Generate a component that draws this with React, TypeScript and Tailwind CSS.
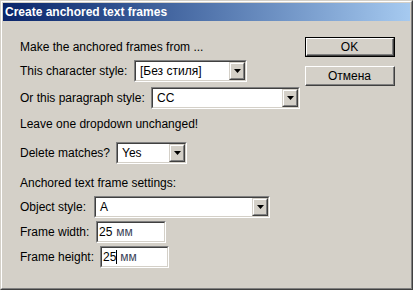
import React from 'react';

function Sunken({ className = '', children }: { className?: string; children?: React.ReactNode }) {
  return (
    <div className={`border border-t-[#808080] border-l-[#808080] border-b-white border-r-white ${className}`}>
      <div className="flex h-full border border-t-[#404040] border-l-[#404040] border-b-[#d4d0c8] border-r-[#d4d0c8] bg-white">
        {children}
      </div>
    </div>
  );
}

function Combo({ value, className }: { value: string; className: string }) {
  return (
    <Sunken className={`h-[22px] ${className}`}>
      <div className="flex flex-1 items-center pl-[4px] text-black">{value}</div>
      <div className="flex w-[16px] items-center justify-center border border-t-[#d4d0c8] border-l-[#d4d0c8] border-b-[#404040] border-r-[#404040] bg-[#d4d0c8]">
        <div className="flex h-full w-full items-center justify-center border border-t-white border-l-white border-b-[#808080] border-r-[#808080]">
          <svg width="7" height="4" viewBox="0 0 7 4">
            <path d="M0 0h7L3.5 4z" fill="#000" />
          </svg>
        </div>
      </div>
    </Sunken>
  );
}

function Field({ value, caret, className }: { value: string; caret?: boolean; className: string }) {
  return (
    <Sunken className={`h-[22px] ${className}`}>
      <div className="flex flex-1 items-center pl-[1px] text-black">
        <span>{value}</span>
        {caret && <span className="-mr-px h-[14px] w-px bg-black" />}
        <span className="ml-[4px] text-[#3b4258]">мм</span>
      </div>
    </Sunken>
  );
}

function Button({ label, isDefault }: { label: string; isDefault?: boolean }) {
  const face = (
    <div className="flex h-full w-full border border-t-white border-l-white border-b-[#404040] border-r-[#404040]">
      <div className="flex flex-1 items-center justify-center border-b border-r border-[#808080] text-black">
        {label}
      </div>
    </div>
  );
  return isDefault ? (
    <div className="h-[20px] border border-black">{face}</div>
  ) : (
    <div className="h-[20px]">{face}</div>
  );
}

function Row({ label, labelWidth, children, className = '' }: { label: string; labelWidth: string; children: React.ReactNode; className?: string }) {
  return (
    <div className={`flex items-center ${className}`}>
      <span className={labelWidth}>{label}</span>
      {children}
    </div>
  );
}

export default function App() {
  return (
    <div className="h-[290px] w-[413px] border border-t-[#d4d0c8] border-l-[#d4d0c8] border-b-[#404040] border-r-[#404040] font-['Liberation_Sans',Arial,sans-serif] text-[12px] leading-[14px] text-black">
      <div className="flex h-full flex-col border border-t-white border-l-white border-b-[#808080] border-r-[#808080] bg-[#d4d0c8] p-px">
        {/* Title bar */}
        <div className="flex h-[18px] items-center bg-linear-to-r from-[#0a246a] to-[#a6caf0] pl-[2px] font-bold text-white">
          Create anchored text frames
        </div>

        <div className="flex flex-1">
          {/* Left column */}
          <div className="flex flex-1 flex-col pl-[17px] pt-[19px]">
            <div className="h-[14px]">Make the anchored frames from ...</div>
            <Row label="This character style:" labelWidth="w-[114px]" className="mt-[6px]">
              <Combo value="[Без стиля]" className="w-[113px]" />
            </Row>
            <Row label="Or this paragraph style:" labelWidth="w-[131px]" className="mt-[5px]">
              <Combo value="CC" className="w-[149px]" />
            </Row>
            <div className="mt-[8px] h-[14px]">Leave one dropdown unchanged!</div>
            <Row label="Delete matches?" labelWidth="w-[96px]" className="mt-[11px]">
              <Combo value="Yes" className="w-[71px]" />
            </Row>
            <div className="mt-[12px] h-[14px]">Anchored text frame settings:</div>
            <Row label="Object style:" labelWidth="w-[74px]" className="mt-[6px]">
              <Combo value="A" className="w-[176px]" />
            </Row>
            <Row label="Frame width:" labelWidth="w-[76px]" className="mt-[3px]">
              <Field value="25" className="w-[70px]" />
            </Row>
            <Row label="Frame height:" labelWidth="w-[80px]" className="mt-[3px]">
              <Field value="25" caret className="w-[69px]" />
            </Row>
          </div>

          {/* Buttons */}
          <div className="mr-[15px] flex w-[90px] flex-col gap-[9px] pt-[16px]">
            <Button label="OK" isDefault />
            <Button label="Отмена" />
          </div>
        </div>
      </div>
    </div>
  );
}
